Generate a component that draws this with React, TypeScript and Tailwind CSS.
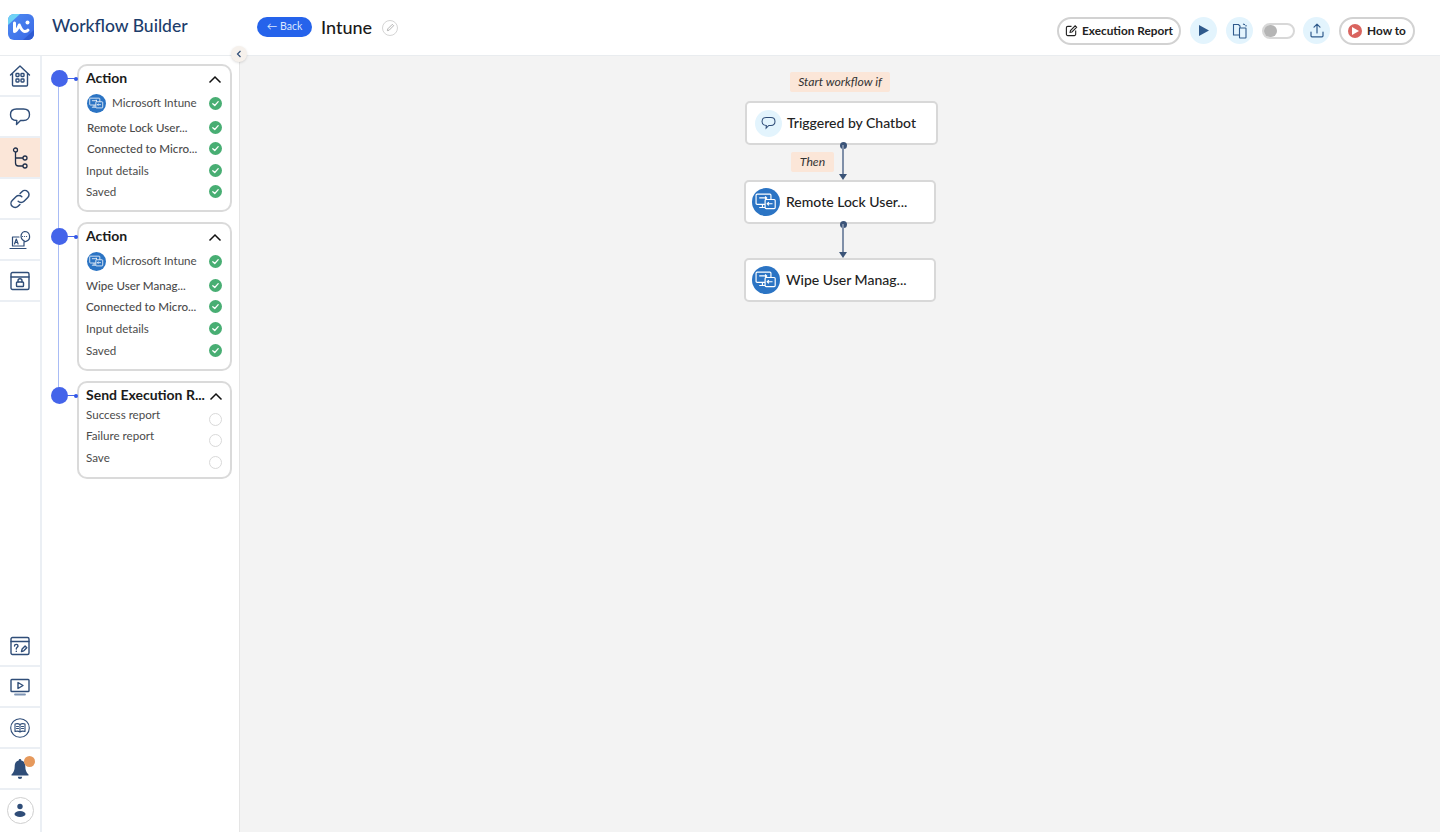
import React from 'react';

const navy = '#2f4d78';

function Logo() {
  return (
    <svg width="26" height="26" viewBox="0 0 26 26">
      <defs>
        <linearGradient id="lg" x1="0" y1="0" x2="1" y2="1">
          <stop offset="0" stopColor="#4f8cf2" />
          <stop offset="1" stopColor="#3a68e6" />
        </linearGradient>
      </defs>
      <rect width="26" height="26" rx="6" fill="url(#lg)" />
      <path d="M0 11V6a6 6 0 0 1 6-6h6z" fill="#6fd3f5" />
      <path d="M26 16v4a6 6 0 0 1-6 6h-5z" fill="#2f5bd2" />
      <path d="M6.500 9v8.500c2.200 0 3.300-3 4.800-6.500 1.500 3.500 3 6.500 5.500 6.500 1.500 0 2.600-.6 3.200-1.400" fill="none" stroke="#fff" strokeWidth="3" strokeLinejoin="round" strokeLinecap="round" />
      <circle cx="19.500" cy="8.500" r="2" fill="#fff" />
    </svg>
  );
}

function IntuneIcon({ size }: { size: number }) {
  return (
    <span className="flex shrink-0 items-center justify-center rounded-full bg-[#2b74c4]" style={{ width: size, height: size }}>
      <svg width={size * 0.76} height={size * 0.76} viewBox="0 0 20 20" fill="none" stroke="#fff" strokeWidth="1.100">
        <rect x="1" y="3" width="14" height="9.500" rx="1" />
        <path d="M4 15.500h6M7 12.500v3" />
        <rect x="9.500" y="8" width="9.500" height="8.500" rx="1" fill="#2b74c4" />
        <path d="M4 6.500h7M9.500 5 11 6.500 9.500 8M16.500 12h-5M13 10.500 11.500 12l1.500 1.500" />
      </svg>
    </span>
  );
}

function Check() {
  return (
    <span className="flex h-[13px] w-[13px] items-center justify-center rounded-full bg-[#48ae73]">
      <svg width="9" height="9" viewBox="0 0 10 10" fill="none" stroke="#fff" strokeWidth="1.400" strokeLinecap="round" strokeLinejoin="round">
        <path d="M2 5.200 4.200 7.200 8 3" />
      </svg>
    </span>
  );
}

function ChevronUp() {
  return (
    <svg width="14" height="9" viewBox="0 0 14 9" fill="none" stroke="#111" strokeWidth="1.500">
      <path d="M1.500 7.500 7 2l5.500 5.500" />
    </svg>
  );
}

function NavIcon({ name }: { name: string }) {
  const p = { fill: 'none', stroke: navy, strokeWidth: 1.4, strokeLinejoin: 'round' as const, strokeLinecap: 'round' as const };
  if (name === 'home') {
    return (
      <svg width="22" height="22" viewBox="0 0 22 22" {...p}>
        <path d="M1.500 10 11 1l9.500 9M3.500 8.500V20a1 1 0 0 0 1 1h13a1 1 0 0 0 1-1V8.500" />
        <rect x="7" y="8.500" width="3" height="3" rx=".7" /><rect x="12" y="8.500" width="3" height="3" rx=".7" />
        <rect x="7" y="14" width="3" height="3" rx=".7" /><rect x="12" y="14" width="3" height="3" rx=".7" />
      </svg>
    );
  }
  if (name === 'chat') {
    return (
      <svg width="22" height="20" viewBox="0 0 22 20" {...p}>
        <path d="M7.500 2h7c3.800 0 6 2.400 6 5.700s-2.200 5.800-6 5.800h-3L7.500 17.500l.3-4C4 13.300 1.500 11 1.500 7.700S3.700 2 7.500 2z" />
      </svg>
    );
  }
  if (name === 'tree') {
    return (
      <svg width="16" height="22" viewBox="0 0 16 22" fill="none" stroke="#1f2f4a" strokeWidth="1.300">
        <circle cx="3.500" cy="3" r="2" /><circle cx="13" cy="11" r="2" /><circle cx="13" cy="19" r="2" />
        <path d="M3.500 5v11a3 3 0 0 0 3 3H11M3.500 11H11" />
      </svg>
    );
  }
  if (name === 'link') {
    return (
      <svg width="22" height="22" viewBox="0 0 24 24" {...p} strokeWidth="1.600">
        <path d="M10 14.500a4.500 4.500 0 0 0 6.400 0l4.100-4.100a4.500 4.500 0 0 0-6.400-6.400l-2 2" />
        <path d="M14 9.500a4.500 4.500 0 0 0-6.400 0l-4.100 4.100a4.500 4.500 0 0 0 6.400 6.400l2-2" />
      </svg>
    );
  }
  if (name === 'agent') {
    return (
      <svg width="22" height="20" viewBox="0 0 22 20" {...p} strokeWidth="1.200">
        <path d="M10 7H3.500v9H15v-3" /><path d="M1 18.500h16" />
        <path d="M5.500 14l1.800-5 1.800 5M6.200 12.500h2.200" />
        <path d="M15.500 1.500a5 5 0 0 1 1.500 9.800l-2 1 .2-1.400a5 5 0 0 1 .3-9.400z" />
        <path d="M13.500 6.500h.1M15.500 6.500h.1M17.500 6.500h.1" />
      </svg>
    );
  }
  if (name === 'lock') {
    return (
      <svg width="20" height="20" viewBox="0 0 20 20" {...p}>
        <rect x="1" y="1.500" width="18" height="17" rx="1.500" /><path d="M1 6h18" />
        <rect x="6.500" y="11" width="7" height="4.500" rx=".8" /><path d="M8 11V9.800a2 2 0 0 1 4 0V11" />
      </svg>
    );
  }
  if (name === 'help') {
    return (
      <svg width="20" height="20" viewBox="0 0 20 20" {...p}>
        <rect x="1" y="1.500" width="18" height="17" rx="1.500" /><path d="M1 5.500h18" />
        <path d="M4.500 10c0-2.200 3.500-2.200 3.500 0 0 1.400-1.700 1.300-1.700 3M6.300 15.300v.1" />
        <path d="M11.500 15.500l.6-2.400 3-3 1.700 1.700-3 3z" />
      </svg>
    );
  }
  if (name === 'video') {
    return (
      <svg width="20" height="20" viewBox="0 0 20 20" {...p}>
        <rect x="1" y="2.500" width="18" height="12" rx=".8" /><path d="M8 5.500v6l5-3z" /><path d="M5 17.500h10" strokeWidth="1.800" stroke="#7d93b3" />
      </svg>
    );
  }
  if (name === 'book') {
    return (
      <svg width="20" height="20" viewBox="0 0 20 20" {...p} strokeWidth="1.100">
        <circle cx="10" cy="10" r="9.300" />
        <path d="M10 6.500C8.500 5.500 6.500 5.500 5 6v7.500c1.500-.5 3.500-.5 5 .5 1.500-1 3.500-1 5-.5V6c-1.500-.5-3.500-.5-5 .5zM10 6.500V14M6.500 8.500h2M6.500 10.500h2M11.500 8.500h2M11.500 10.500h2" />
      </svg>
    );
  }
  if (name === 'bell') {
    return (
      <svg width="20" height="22" viewBox="0 0 20 22" fill={navy}>
        <path d="M10 1c.8 0 1.300.6 1.300 1.400 3 .7 4 3.300 4 6.100 0 3.500 1 6 3.200 8v1H1.500v-1c2.200-2 3.200-4.500 3.200-8 0-2.800 1-5.400 4-6.100C8.700 1.600 9.200 1 10 1z" />
        <path d="M7.800 18.800h4.400a2.200 2.200 0 0 1-4.400 0z" />
      </svg>
    );
  }
  return (
    <span className="flex h-[27px] w-[27px] items-center justify-center rounded-full border border-[#cfcfcf]">
      <svg width="14" height="15" viewBox="0 0 14 15" fill={navy}>
        <circle cx="7" cy="3.500" r="2.700" /><ellipse cx="7" cy="11" rx="5.500" ry="3" />
      </svg>
    </span>
  );
}

function NavRow({ name, active, border = true }: { name: string; active?: boolean; border?: boolean }) {
  return (
    <div className={`relative flex h-[41px] items-center justify-center ${border ? 'border-b-2 border-[#ebeff4]' : ''} ${active ? 'bg-[#fbe6d8]' : ''}`}>
      <NavIcon name={name} />
      {name === 'bell' && <span className="absolute left-[24px] top-[7px] h-[11px] w-[11px] rounded-full bg-[#e6995c]" />}
    </div>
  );
}

type Step = { label: string; left?: number; weight?: string; logo?: boolean; gap: number };

function StepCard({ title, steps, height, plain }: { title: string; steps: Step[]; height: number; plain?: boolean }) {
  return (
    <div className="relative ml-[35px] w-[155px] rounded-[10px] border-2 border-[#dadada] bg-white px-[7px]" style={{ height }}>
      <span className="absolute left-[-28px] top-[4px] h-[17px] w-[17px] rounded-full bg-[#4464ea]" />
      <span className="absolute left-[-12px] top-[12px] h-px w-[10px] bg-[#4464ea]" />
      <span className="absolute left-[-5px] top-[10.500px] h-[4px] w-[4px] rounded-full bg-[#3257e8]" />
      <div className="flex h-[24px] items-center justify-between pr-[1px]">
        <span className="whitespace-nowrap text-[14px] font-bold leading-none text-[#1b1b1b]">{title}</span>
        <span className="ml-1 shrink-0 translate-y-[1px]"><ChevronUp /></span>
      </div>
      {steps.map((s, i) => (
        <div key={s.label} className="flex h-[14px] items-center justify-between pr-[1px]" style={{ marginTop: i === 0 ? s.gap + 1 : s.gap }}>
          <div className={`flex items-center gap-[6px] ${!plain && !s.logo ? 'translate-y-[1px]' : ''}`} style={{ marginLeft: s.left ?? 0 }}>
            {s.logo && <IntuneIcon size={19} />}
            <span className={`whitespace-nowrap text-[11.600px] leading-none text-[#4b4b4b] ${s.weight ?? 'font-normal'}`}>{s.label}</span>
          </div>
          {plain ? (
            <span className="mt-[8px] h-[13px] w-[13px] rounded-full border border-[#d9d9d9]" />
          ) : (
            <Check />
          )}
        </div>
      ))}
    </div>
  );
}

function RoundIcon({ children }: { children: React.ReactNode }) {
  return <span className="flex h-[27px] w-[27px] items-center justify-center rounded-full bg-[#e3f4fd]">{children}</span>;
}

function Connector({ top, height }: { top: number; height: number }) {
  return (
    <div className="absolute left-[599.500px] w-[7px]" style={{ top, height }}>
      <span className="absolute left-0 top-[-3px] h-[7px] w-[7px] rounded-full bg-[#3b5478]" />
      <span className="absolute left-[2.500px] top-0 w-[2px] bg-[#7f8fa8]" style={{ height: height - 5 }} />
      <span className="absolute bottom-0 left-[-0.500px] h-0 w-0 border-x-[4px] border-t-[6px] border-x-transparent border-t-[#3b5478]" />
    </div>
  );
}

function FlowNode({ left, top, width, label, logo }: { left: number; top: number; width: number; label: string; logo?: boolean }) {
  return (
    <div className="absolute flex h-[44px] items-center gap-[6px] rounded-[5px] border-2 border-[#d8d8d8] bg-white pl-[6px]" style={{ left, top, width }}>
      {logo ? (
        <IntuneIcon size={28} />
      ) : (
        <span className="ml-[2px] mr-[-1px] flex h-[27px] w-[27px] items-center justify-center rounded-full bg-[#e3f4fd]">
          <svg width="15" height="14" viewBox="0 0 22 20" fill="none" stroke={navy} strokeWidth="1.500">
            <path d="M7.500 2h7c3.800 0 6 2.400 6 5.700s-2.200 5.800-6 5.800h-3L7.500 17.500l.3-4C4 13.300 1.500 11 1.500 7.700S3.700 2 7.500 2z" />
          </svg>
        </span>
      )}
      <span className="-translate-y-[1px] whitespace-nowrap text-[14px] font-medium text-[#222]">{label}</span>
    </div>
  );
}

function Tag({ left, top, width, label }: { left: number; top: number; width: number; label: string }) {
  return (
    <div className="absolute flex h-[20px] items-center justify-center rounded-[2px] bg-[#fbe6d8] text-[12.200px] italic text-[#333]" style={{ left, top, width }}>
      {label}
    </div>
  );
}

const action1: Step[] = [
  { label: 'Microsoft Intune', logo: true, left: 1, gap: 5 },
  { label: 'Remote Lock User...', left: 1, weight: 'font-medium', gap: 10 },
  { label: 'Connected to Micro...', left: 1, weight: 'font-medium', gap: 7 },
  { label: 'Input details', gap: 8 },
  { label: 'Saved', gap: 7 },
];

const action2: Step[] = [
  { label: 'Microsoft Intune', logo: true, left: 1, gap: 5 },
  { label: 'Wipe User Manag...', weight: 'font-medium', gap: 10 },
  { label: 'Connected to Micro...', weight: 'font-medium', gap: 7 },
  { label: 'Input details', gap: 8 },
  { label: 'Saved', gap: 8 },
];

const report: Step[] = [
  { label: 'Success report', gap: 0 },
  { label: 'Failure report', gap: 7 },
  { label: 'Save', gap: 8 },
];

export default function App() {
  return (
    <div className="flex h-screen flex-col overflow-hidden bg-white font-['Lato','Noto_Sans',sans-serif]">
      <header className="flex h-[56px] shrink-0 items-center border-b border-[#e9ecef] bg-white">
        <div className="ml-[8px] mt-[-1px]"><Logo /></div>
        <h1 className="ml-[18px] mt-[-2px] w-[205px] text-[17.500px] font-medium text-[#1c3d6b]">Workflow Builder</h1>
        <button className="mt-[-1px] flex h-[20px] w-[55px] items-center justify-center rounded-full bg-[#2563eb] text-[10.500px] text-[#dbe7ff]">← Back</button>
        <span className="ml-[9px] text-[18px] font-medium text-[#1a1a1a]">Intune</span>
        <span className="ml-[10px] flex h-[16px] w-[16px] items-center justify-center rounded-full border border-[#d5d5d5]">
          <svg width="9" height="9" viewBox="0 0 10 10" fill="none" stroke="#aaa" strokeWidth="1"><path d="M1.500 8.500l.5-2L7 1.500 8.500 3l-5 5z" /></svg>
        </span>
        <div className="ml-auto mr-[25px] mt-[6px] flex items-center">
          <button className="flex h-[28px] w-[124px] items-center justify-center gap-[4px] rounded-full border-2 border-[#d2d2d2] text-[11.800px] font-bold text-[#222]">
            <svg width="13" height="13" viewBox="0 0 14 14" fill="none" stroke="#222" strokeWidth="1.200">
              <path d="M7 2.500H3A1.500 1.500 0 0 0 1.500 4v7A1.500 1.500 0 0 0 3 12.500h7a1.500 1.500 0 0 0 1.500-1.500V7" />
              <path d="M5.500 9l.4-2 5-5 1.600 1.600-5 5z" />
            </svg>
            Execution Report
          </button>
          <div className="ml-[9px]">
            <RoundIcon>
              <svg width="10" height="11" viewBox="0 0 10 11" fill="#2f5a8c"><path d="M0 0l10 5.500L0 11z" /></svg>
            </RoundIcon>
          </div>
          <div className="ml-[9px]">
            <RoundIcon>
              <svg width="16" height="16" viewBox="0 0 16 16" fill="none" stroke="#2f5a8c" strokeWidth="1.100">
                <path d="M7.500 12H1.500V1.500h5L8 3v2" /><rect x="7.500" y="5" width="6.500" height="10" rx=".5" /><path d="M11 1l2 .8M14 2v1.500" />
              </svg>
            </RoundIcon>
          </div>
          <span className="relative ml-[9px] h-[16px] w-[33px] rounded-full border-2 border-[#d8d8d8] bg-white">
            <span className="absolute left-0 top-0 h-[12px] w-[13px] rounded-full bg-[#b5b5b5]" />
          </span>
          <div className="ml-[8px]">
            <RoundIcon>
              <svg width="14" height="15" viewBox="0 0 14 15" fill="none" stroke="#2f5a8c" strokeWidth="1.200" strokeLinecap="round" strokeLinejoin="round">
                <path d="M7 10V1.500M4 4.200 7 1.200l3 3M1 9v3.800a1 1 0 0 0 1 1h10a1 1 0 0 0 1-1V9" />
              </svg>
            </RoundIcon>
          </div>
          <button className="ml-[9px] flex h-[28px] w-[76px] items-center justify-center gap-[5px] rounded-full border-2 border-[#d2d2d2] text-[11.800px] font-bold text-[#222]">
            <span className="flex h-[14px] w-[14px] items-center justify-center rounded-full bg-[#d9645f]">
              <svg width="7" height="8" viewBox="0 0 7 8" fill="#fff"><path d="M0 0l7 4-7 4z" /></svg>
            </span>
            How to
          </button>
        </div>
      </header>

      <div className="relative flex min-h-0 flex-1">
        <nav className="flex w-[42px] shrink-0 flex-col justify-between border-r-2 border-[#ebeff4] pb-px">
          <div>
            <NavRow name="home" />
            <NavRow name="chat" />
            <NavRow name="tree" active />
            <NavRow name="link" />
            <NavRow name="agent" />
            <NavRow name="lock" />
          </div>
          <div>
            <NavRow name="help" />
            <NavRow name="video" />
            <NavRow name="book" />
            <NavRow name="bell" />
            <NavRow name="user" border={false} />
          </div>
        </nav>

        <aside className="relative flex w-[198px] shrink-0 flex-col gap-[10px] border-r border-[#e5e5e5] pt-[8px]">
          <span className="absolute left-[16px] top-[23px] h-[316px] w-px bg-[#a9bcf5]" />
          <StepCard title="Action" steps={action1} height={148} />
          <StepCard title="Action" steps={action2} height={149} />
          <StepCard title="Send Execution R..." steps={report} height={98} plain />
        </aside>

        <span className="absolute left-[231px] top-[-10px] z-10 flex h-[16px] w-[16px] items-center justify-center rounded-full bg-[#f6f1ec] shadow-sm">
          <svg width="8" height="8" viewBox="0 0 8 8" fill="none" stroke="#2f4d78" strokeWidth="1.200"><path d="M5.500 1 2.500 4l3 3" /></svg>
        </span>

        <main className="relative min-w-0 flex-1 bg-[#f3f3f3]">
          <Tag left={550} top={16} width={100} label="Start workflow if" />
          <FlowNode left={505} top={45} width={193} label="Triggered by Chatbot" />
          <Connector top={89} height={35} />
          <Tag left={551} top={96} width={43} label="Then" />
          <FlowNode left={504} top={124} width={192} label="Remote Lock User..." logo />
          <Connector top={168} height={34} />
          <FlowNode left={504} top={202} width={192} label="Wipe User Manag..." logo />
        </main>
      </div>
    </div>
  );
}
